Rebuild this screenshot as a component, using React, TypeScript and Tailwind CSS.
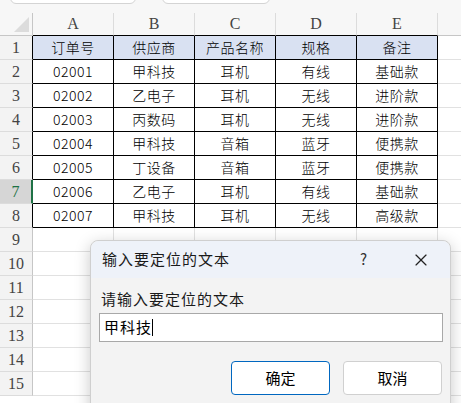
import { X } from 'lucide-react'

const cols = ['A', 'B', 'C', 'D', 'E']

const rows = [
  ['订单号', '供应商', '产品名称', '规格', '备注'],
  ['02001', '甲科技', '耳机', '有线', '基础款'],
  ['02002', '乙电子', '耳机', '无线', '进阶款'],
  ['02003', '丙数码', '耳机', '无线', '进阶款'],
  ['02004', '甲科技', '音箱', '蓝牙', '便携款'],
  ['02005', '丁设备', '音箱', '蓝牙', '便携款'],
  ['02006', '乙电子', '耳机', '有线', '基础款'],
  ['02007', '甲科技', '耳机', '无线', '高级款'],
]

const cjk = { fontFamily: '"Noto Sans CJK SC", "Noto Sans", sans-serif' }
const serif = { fontFamily: '"Liberation Serif", "DejaVu Serif", serif' }

function Row({ n }: { n: number }) {
  const data = rows[n - 1]
  const selected = n === 7
  return (
    <div className="flex h-[24px] shrink-0">
      <div
        style={serif}
        className={`w-[33px] shrink-0 flex items-center justify-center text-[16px] border-b border-[#dcdcdc] ${
          selected
            ? 'bg-[#d6d6d6] text-[#1e7145] border-r-2 border-r-[#1e7145]'
            : data
              ? 'bg-[#f3f3f3] text-[#444] border-r border-r-black'
              : 'bg-[#f3f3f3] text-[#444] border-r border-r-[#c6c6c6]'
        }`}
      >
        {n}
      </div>
      {cols.map((c, i) => (
        <div
          key={c}
          style={cjk}
          className={`w-[81px] shrink-0 flex items-center justify-center text-[14px] font-light tracking-[0.5px] text-black border-r border-b ${
            data ? 'border-black' : 'border-[#e1e1e1]'
          } ${n === 1 ? 'bg-[#d9e1f2]' : 'bg-white'}`}
        >
          {data ? data[i] : ''}
        </div>
      ))}
      <div className="flex-1 border-b border-[#e1e1e1] bg-white" />
    </div>
  )
}

export default function App() {
  return (
    <div className="relative w-[461px] h-[403px] overflow-hidden bg-white flex flex-col">
      {/* toolbar edge */}
      <div className="h-[13px] shrink-0 bg-[#f7f7f7] relative">
        <div className="absolute left-[10px] top-[-10px] w-[126px] h-[14px] bg-white border border-[#d4d4d4] rounded-md" />
        <div className="absolute left-[162px] top-[-10px] w-[108px] h-[14px] bg-white border border-[#d4d4d4] rounded-md" />
      </div>

      {/* column headers */}
      <div className="flex h-[23px] shrink-0 bg-[#f7f7f7]">
        <div className="w-[33px] shrink-0 border-r border-b border-[#c6c6c6] flex items-end justify-end pr-[3px] pb-[3px]">
          <div className="w-0 h-0 border-l-[15px] border-l-transparent border-b-[15px] border-b-[#dcdcdc]" />
        </div>
        {cols.map((c) => (
          <div
            key={c}
            style={serif}
            className="w-[81px] shrink-0 flex items-center justify-center text-[16px] text-[#444] border-r border-r-[#dcdcdc] border-b border-b-black"
          >
            {c}
          </div>
        ))}
        <div className="flex-1 border-b border-[#c6c6c6]" />
      </div>

      {Array.from({ length: 15 }, (_, i) => (
        <Row key={i} n={i + 1} />
      ))}

      {/* dialog */}
      <div
        style={cjk}
        className="absolute left-[90px] top-[240px] w-[361px] h-[180px] rounded-lg bg-[#f3f3f3] border border-[#cfcfcf] shadow-[0_4px_16px_rgba(0,0,0,0.22)]"
      >
        <div className="h-[37px] flex items-center rounded-t-lg bg-[#eef2f9] pl-[11px] text-[15px] tracking-[1px] text-[#1a1a1a]">
          <span>输入要定位的文本</span>
          <span className="ml-auto mr-[43px] text-[15px] text-[#333]">?</span>
          <X size={20} strokeWidth={1.4} className="mr-[19px] text-[#222]" />
        </div>
        <div className="px-[8px]">
          <div className="mt-[11px] h-[20px] pl-[2px] flex items-center text-[15px] tracking-[1px] text-[#1a1a1a]">
            请输入要定位的文本
          </div>
          <div className="mt-[4px] w-[344px] h-[29px] bg-white border border-[#a8a8a8] flex items-center pl-[4px] text-[15px] tracking-[1px] text-black">
            甲科技
            <span className="w-px h-[17px] bg-black" />
          </div>
          <div className="mt-[19px] flex justify-end gap-[13px] pr-[0px]">
            <button className="w-[99px] h-[34px] rounded-[4px] bg-white border border-[#0067c0] text-[15px] text-black">
              确定
            </button>
            <button className="w-[99px] h-[34px] rounded-[4px] bg-white border border-[#d0d0d0] text-[15px] text-black">
              取消
            </button>
          </div>
        </div>
      </div>
    </div>
  )
}
